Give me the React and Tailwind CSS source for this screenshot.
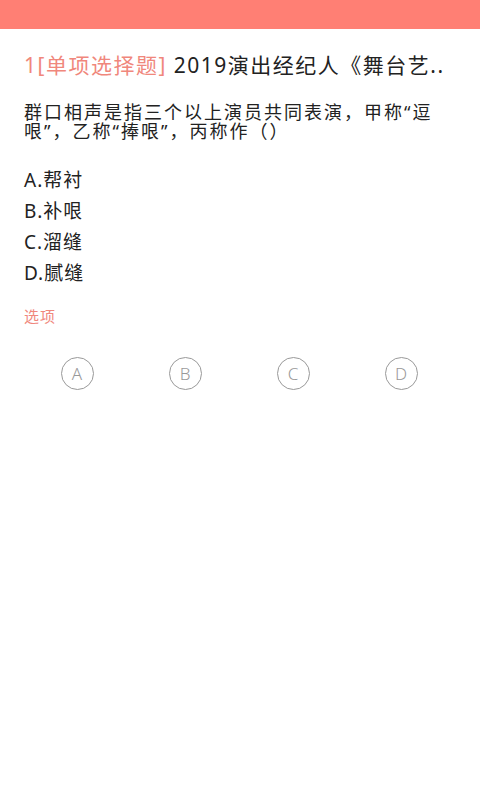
const options = ['A.帮衬', 'B.补哏', 'C.溜缝', 'D.腻缝'];
const letters = ['A', 'B', 'C', 'D'];

export default function App() {
  return (
    <div
      className="min-h-[800px] w-[480px] bg-white text-[#222]"
      style={{ fontFamily: '"Noto Sans", "Noto Sans CJK SC", sans-serif' }}
    >
      <div className="h-[29px] bg-[#ff7f74]" />

      <div className="px-6">
        <div className="mt-[20px] h-[32px] whitespace-nowrap text-[21px] leading-[32px] tracking-[1.5px]">
          <span className="text-[#f0877c]">1[单项选择题]</span>
          <span> 2019演出经纪人《舞台艺..</span>
        </div>

        <p className="mt-[22px] w-[420px] text-[18px] leading-[19px] tracking-[2px]">
          群口相声是指三个以上演员共同表演，甲称“逗哏”，乙称“捧哏”，丙称作（）
        </p>

        <div className="mt-[24px] flex flex-col">
          {options.map((o) => (
            <div key={o} className="h-[31px] text-[19px] leading-[31px] tracking-[1px]">
              {o}
            </div>
          ))}
        </div>

        <div className="mt-[16px] text-[15px] leading-[22px] tracking-[1px] text-[#f0877c]">选项</div>
      </div>

      <div className="ml-[23px] mt-[30px] grid w-[432px] grid-cols-4">
        {letters.map((l) => (
          <div key={l} className="flex justify-center">
            <div className="flex h-[33px] w-[33px] items-center justify-center rounded-full border border-[#999] text-[17px] font-light text-[#999]">
              {l}
            </div>
          </div>
        ))}
      </div>
    </div>
  );
}
